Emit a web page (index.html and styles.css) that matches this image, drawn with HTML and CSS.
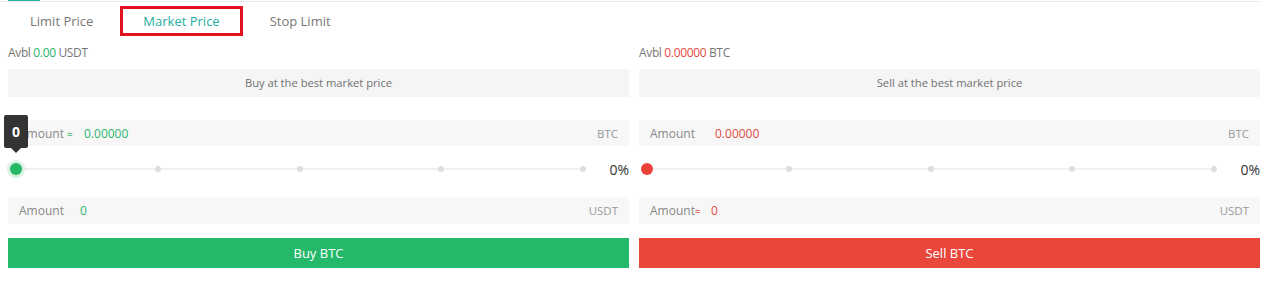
FILE: index.html
```html
<!DOCTYPE html>
<html>
<head>
<meta charset="utf-8">
<link rel="stylesheet" href="styles.css">
</head>
<body>
<div class="page">
  <div class="topline"><span class="topline-active"></span></div>
  <div class="tabs">
    <span class="tab">Limit Price</span>
    <span class="tab tab-active">Market Price</span>
    <span class="tab">Stop Limit</span>
  </div>
  <div class="cols">
    <div class="col buy">
      <div class="avbl">Avbl <span class="avbl-val">0.00</span> USDT</div>
      <div class="info">Buy at the best market price</div>
      <div class="field field-first">
        <span class="label">Amount <span class="approx">≈</span></span>
        <span class="value">0.00000</span>
        <span class="unit">BTC</span>
      </div>
      <div class="slider">
        <div class="track">
          <span class="dot dot-0"></span>
          <span class="dot dot-25"></span>
          <span class="dot dot-50"></span>
          <span class="dot dot-75"></span>
          <span class="dot dot-100"></span>
          <span class="handle"></span>
          <span class="tooltip">0</span>
        </div>
        <span class="pct">0%</span>
      </div>
      <div class="field field-second">
        <span class="label">Amount</span>
        <span class="value">0</span>
        <span class="unit">USDT</span>
      </div>
      <button class="btn">Buy BTC</button>
    </div>
    <div class="col sell">
      <div class="avbl">Avbl <span class="avbl-val">0.00000</span> BTC</div>
      <div class="info">Sell at the best market price</div>
      <div class="field field-first">
        <span class="label">Amount</span>
        <span class="value">0.00000</span>
        <span class="unit">BTC</span>
      </div>
      <div class="slider">
        <div class="track">
          <span class="dot dot-0"></span>
          <span class="dot dot-25"></span>
          <span class="dot dot-50"></span>
          <span class="dot dot-75"></span>
          <span class="dot dot-100"></span>
          <span class="handle"></span>
        </div>
        <span class="pct">0%</span>
      </div>
      <div class="field field-second">
        <span class="label">Amount<span class="approx">≈</span></span>
        <span class="value">0</span>
        <span class="unit">USDT</span>
      </div>
      <button class="btn">Sell BTC</button>
    </div>
  </div>
</div>
</body>
</html>
```

FILE: styles.css
```css
* { box-sizing: border-box; }
html, body { margin: 0; padding: 0; background: #fff; }
body { font-family: "Open Sans", "Liberation Sans", sans-serif; color: #666; }

.page { width: 1269px; height: 300px; }

.topline {
  height: 2px;
  margin-right: 9px;
  border-bottom: 1px solid #ebebeb;
  position: relative;
}
.topline-active {
  position: absolute;
  left: 8px; top: 0;
  width: 32px; height: 1px;
  background: #2bb3a6;
}

.tabs {
  display: flex;
  padding-left: 5px;
  margin-top: 4px;
  height: 30px;
}
.tab {
  position: relative;
  padding: 0 25px;
  font-size: 13px;
  line-height: 30px;
  color: #777;
}
.tab-active { color: #26ada2; }
.tab-active::after {
  content: "";
  position: absolute;
  left: 2px; right: 2px; top: 0; bottom: 0;
  border: 3px solid #e2121f;
}

.cols {
  display: flex;
  gap: 10px;
  padding-left: 8px;
}
.col {
  width: 621px;
  display: flex;
  flex-direction: column;
}

.avbl {
  margin-top: 9px;
  height: 16px;
  line-height: 16px;
  font-size: 12px;
  color: #777;
  letter-spacing: -0.35px;
}
.buy .avbl-val { color: #27b56b; }
.sell .avbl-val { color: #e5483e; }

.info {
  margin-top: 8px;
  height: 28px;
  line-height: 28px;
  background: #f5f5f5;
  text-align: center;
  font-size: 11.2px;
  color: #707070;
}

.field {
  display: flex;
  align-items: center;
  background: #f7f7f7;
  padding: 0 11px;
  font-size: 12px;
}
.field-first { margin-top: 23px; height: 26px; }
.field-second { margin-top: 18px; height: 27px; }
.label { color: #888; min-width: 65px; }
.field-second .label { min-width: 61px; }
.approx { font-size: 10px; }
.buy .approx, .buy .value { color: #2db570; }
.sell .approx, .sell .value { color: #e14b43; }
.unit { margin-left: auto; color: #999; font-size: 11.5px; }

.slider {
  margin-top: 13px;
  height: 20px;
  display: flex;
  align-items: center;
}
.track {
  position: relative;
  flex: 1;
  height: 2px;
  margin-left: 8px;
  margin-right: 25px;
  background: #f0f0f0;
}
.dot {
  position: absolute;
  top: 50%;
  width: 6px; height: 6px;
  margin: -3px 0 0 -3px;
  border-radius: 50%;
  background: #dedede;
}
.dot-0 { left: 0; }
.dot-25 { left: 25%; }
.dot-50 { left: 50%; }
.dot-75 { left: 75%; }
.dot-100 { left: 100%; }
.handle {
  position: absolute;
  left: 0; top: 50%;
  width: 12px; height: 12px;
  margin: -6px 0 0 -6px;
  border-radius: 50%;
}
.buy .handle { background: #23b866; box-shadow: 0 0 0 3px #d6f1e1; }
.sell .handle { background: #ea4139; }
.pct { font-size: 14px; color: #333; width: 21px; text-align: right; }

.tooltip {
  position: absolute;
  left: -12px;
  top: -53px;
  width: 24px;
  height: 33px;
  background: #333;
  border-radius: 2px;
  color: #fff;
  font-weight: 700;
  font-size: 14px;
  line-height: 33px;
  text-align: center;
}
.tooltip::after {
  content: "";
  position: absolute;
  left: 50%;
  bottom: -5px;
  margin-left: -5px;
  border-left: 5px solid transparent;
  border-right: 5px solid transparent;
  border-top: 5px solid #333;
}

.btn {
  margin-top: 14px;
  height: 30px;
  border: 0;
  padding: 0;
  font-family: inherit;
  font-size: 13px;
  color: #fff;
}
.buy .btn { background: #24b96a; }
.sell .btn { background: #e9473c; }
```
